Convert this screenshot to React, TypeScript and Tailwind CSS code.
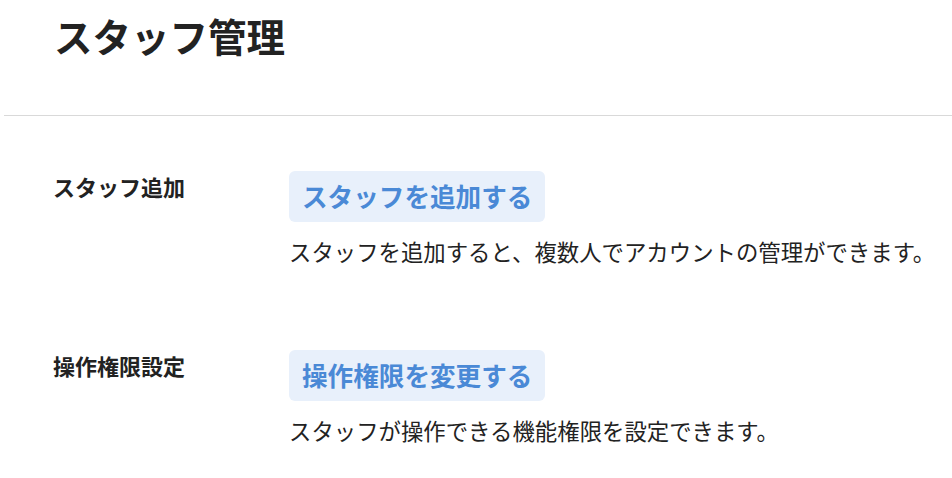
import React from "react";

const FONT = { fontFamily: '"Noto Sans CJK JP", "Noto Sans", sans-serif' };

const SECTIONS = [
  {
    label: "スタッフ追加",
    action: "スタッフを追加する",
    description: "スタッフを追加すると、複数人でアカウントの管理ができます。",
  },
  {
    label: "操作権限設定",
    action: "操作権限を変更する",
    description: "スタッフが操作できる機能権限を設定できます。",
  },
];

function SettingRow({ label, action, description }: { label: string; action: string; description: string }) {
  return (
    <div className="flex items-start">
      <div className="w-[236px] shrink-0 text-[22px] leading-[30px] font-bold text-[#222222]">{label}</div>
      <div className="flex flex-col items-start">
        <button
          type="button"
          className="h-[51px] px-[13px] flex items-center rounded-md bg-[#e8f0fb] text-[#4a89d6] text-[25.6px] font-bold"
        >
          {action}
        </button>
        <p className="mt-[13px] text-[22.4px] leading-[32px] text-[#222222]">{description}</p>
      </div>
    </div>
  );
}

export default function App() {
  return (
    <div className="min-h-screen bg-white pl-[4px]" style={FONT}>
      <header className="h-[116px] border-b border-[#d9d9d9] pl-[50px] pt-[11px]">
        <h1 className="text-[38.5px] leading-[48px] font-bold text-[#222222]">スタッフ管理</h1>
      </header>
      <main className="pl-[49px] pt-[55px] flex flex-col gap-[83px]">
        {SECTIONS.map((s) => (
          <SettingRow key={s.label} {...s} />
        ))}
      </main>
    </div>
  );
}
